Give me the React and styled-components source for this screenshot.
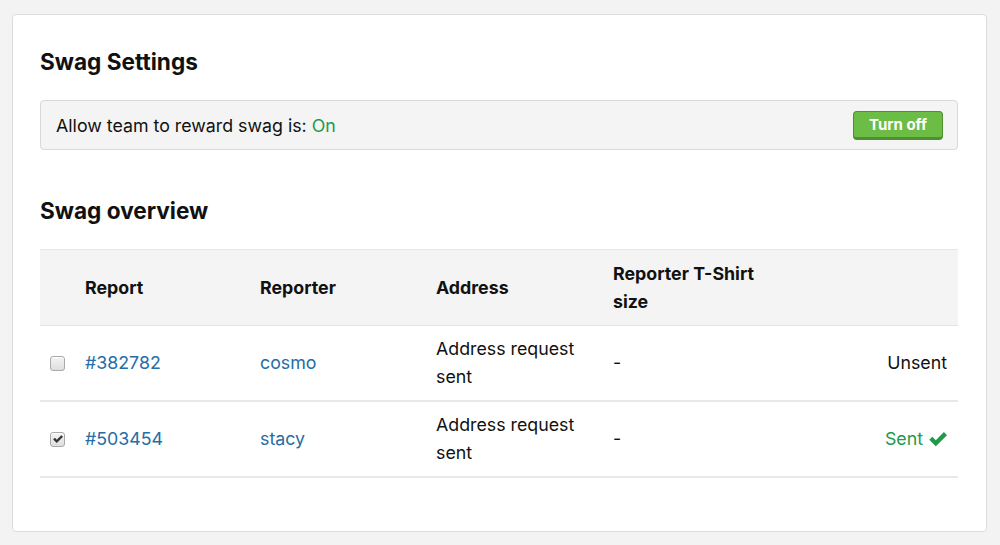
import React from "react";
import styled, { createGlobalStyle } from "styled-components";

const GlobalStyle = createGlobalStyle`
  body {
    margin: 0;
    background: #f3f3f3;
    font-family: Inter, "Liberation Sans", Arial, sans-serif;
    color: #111;
  }
`;

const reports = [
  { id: "#382782", reporter: "cosmo", address: "Address request sent", size: "-", sent: false },
  { id: "#503454", reporter: "stacy", address: "Address request sent", size: "-", sent: true },
];

const CheckIcon = ({ size = 14, color = "currentColor" }) => (
  <svg width={size} height={size} viewBox="1 2 14 12">
    <path d="M1.2 8.6 L3.6 6.2 L6.3 8.9 L12.6 2.6 L15 5 L6.3 13.7 Z" fill={color} />
  </svg>
);

const App = () => {
  return (
    <>
      <GlobalStyle />
      <Page>
        <Card>
          <Heading>Swag Settings</Heading>
          <SettingBar>
            <span>
              Allow team to reward swag is: <Green>On</Green>
            </span>
            <TurnOffButton>Turn off</TurnOffButton>
          </SettingBar>

          <Heading>Swag overview</Heading>
          <Table>
            <HeadRow>
              <Cell />
              <Cell>Report</Cell>
              <Cell>Reporter</Cell>
              <Cell>Address</Cell>
              <Cell>
                Reporter T-Shirt
                <br />
                size
              </Cell>
              <Cell />
            </HeadRow>
            {reports.map((r) => (
              <Row key={r.id}>
                <Cell>
                  <Checkbox $checked={r.sent}>
                    {r.sent && <CheckIcon size={10} color="#333" />}
                  </Checkbox>
                </Cell>
                <Cell>
                  <Link>{r.id}</Link>
                </Cell>
                <Cell>
                  <Link>{r.reporter}</Link>
                </Cell>
                <Cell>
                  Address request
                  <br />
                  sent
                </Cell>
                <Cell>{r.size}</Cell>
                <StatusCell $sent={r.sent}>
                  {r.sent ? (
                    <>
                      Sent <CheckIcon size={18} color="#1e9a4b" />
                    </>
                  ) : (
                    "Unsent"
                  )}
                </StatusCell>
              </Row>
            ))}
          </Table>
        </Card>
      </Page>
    </>
  );
};

export default App;

const Page = styled.div`
  padding: 14px 13px 14px 12px;
`;

const Card = styled.section`
  background: #fff;
  border: 1px solid #dcdcdc;
  border-radius: 4px;
  padding: 33px 28px 53px 27px;
`;

const Heading = styled.h2`
  font-size: 22.6px;
  font-weight: 700;
  margin: 0 0 24px 0;
  line-height: 28px;
`;

const SettingBar = styled.div`
  display: flex;
  align-items: center;
  justify-content: space-between;
  height: 48px;
  padding: 0 14px 0 15px;
  background: #f4f4f4;
  border: 1px solid #d9d9d9;
  border-radius: 4px;
  font-size: 17.8px;
  margin-bottom: 47px;
`;

const Green = styled.span`
  color: #1e9a4b;
`;

const TurnOffButton = styled.button`
  width: 90px;
  height: 29px;
  background: #6cbd45;
  color: #fff;
  font-family: inherit;
  font-size: 15px;
  font-weight: 700;
  border: 1px solid #4f8f32;
  border-bottom-width: 3px;
  border-radius: 4px;
  cursor: pointer;
`;

const Table = styled.div`
  border-top: 1px solid #e6e6e6;
  font-size: 17.8px;
  line-height: 28px;
`;

const Row = styled.div`
  display: grid;
  grid-template-columns: 35px 175px 176px 177px 175px 1fr;
  align-items: center;
  height: 76px;
  border-bottom: 2px solid #e8e8e8;
  box-sizing: border-box;
`;

const HeadRow = styled(Row)`
  background: #f4f4f4;
  font-weight: 700;
  border-bottom: 1px solid #e4e4e4;
`;

const Cell = styled.div`
  padding: 0 10px;
  display: flex;
  align-items: center;
  gap: 6px;
  flex-wrap: wrap;
`;

const StatusCell = styled(Cell)`
  justify-content: flex-end;
  flex-wrap: nowrap;
  padding-right: 11px;
  color: ${(p) => (p.$sent ? "#1e9a4b" : "#111")};
`;

const Link = styled.a`
  color: #256da6;
  text-decoration: none;
  cursor: pointer;
`;

const Checkbox = styled.span`
  width: 13px;
  height: 13px;
  display: inline-flex;
  align-items: center;
  justify-content: center;
  border: 1px solid #a9a9a9;
  border-radius: 3px;
  background: linear-gradient(#f4f4f4, #dedede);
  box-shadow: inset 0 1px 0 #fff;
`;
